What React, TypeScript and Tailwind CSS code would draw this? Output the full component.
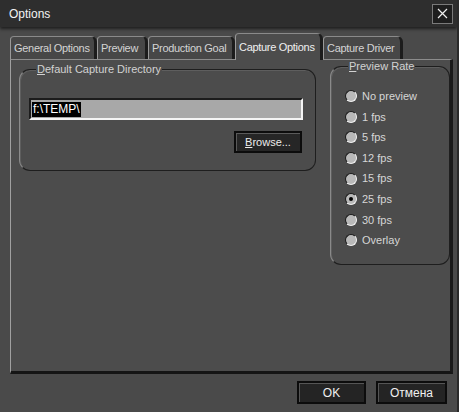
import React from "react";

const font = { fontFamily: '"Liberation Sans", Arial, sans-serif' };

function Tab({ label, w, active }: { label: string; w: number; active?: boolean }) {
  return (
    <div
      style={{ width: w }}
      className={
        "relative flex items-center whitespace-nowrap rounded-tl-[4px] rounded-tr-[6px] border-l border-t border-l-[#9a9a9a] border-t-[#8a8a8a] border-r-[3px] border-r-[#1c1c1c] pl-[3px] text-[11px] leading-none tracking-[-0.3px] " +
        (active ? "h-[27px] bg-[#4c4c4c] text-[#f0f0f0] -mb-[1px] z-10" : "h-[23px] bg-[#474747] text-[#d4d4d4]")
      }
    >
      {label}
    </div>
  );
}

function Radio({ label, checked }: { label: string; checked?: boolean }) {
  return (
    <div className="flex h-[20.6px] items-center">
      <div className="ml-[14px] flex h-[12px] w-[12px] items-center justify-center rounded-full border border-t-[#1a1a1a] border-l-[#1a1a1a] border-r-[#f0f0f0] border-b-[#f0f0f0] bg-[#b9b9b9]">
        {checked && <div className="h-[4px] w-[4px] rounded-full bg-black" />}
      </div>
      <span className="ml-[5px] text-[11px] text-[#d6d6d6]">{label}</span>
    </div>
  );
}

export default function App() {
  return (
    <div style={font} className="flex h-[412px] w-[459px] flex-col overflow-hidden bg-[#4a4a4a] border-r-[2px] border-r-[#2a2a2a]">
      {/* title bar */}
      <div className="flex h-[27px] items-center justify-between bg-[#2e2e2e] pl-[9px] pr-[4px] shadow-[0_2px_3px_rgba(0,0,0,0.6)]">
        <span className="text-[12px] text-[#f2f2f2]">Options</span>
        <div className="flex h-[20px] w-[21px] items-center justify-center border border-[#7a7a7a] bg-[#1e1e1e]">
          <svg width="11" height="11" viewBox="0 0 11 11">
            <path d="M1 1 L10 10 M10 1 L1 10" stroke="#f0f0f0" strokeWidth="1.2" />
          </svg>
        </div>
      </div>

      <div className="flex flex-1 flex-col px-[10px] pt-[6px]">
        {/* tabs */}
        <div className="flex h-[26px] items-end">
          <Tab label="General Options" w={87} />
          <Tab label="Preview" w={51} />
          <Tab label="Production Goal" w={87} />
          <Tab label="Capture Options" w={88} active />
          <Tab label="Capture Driver" w={80} />
        </div>

        {/* panel */}
        <div className="relative flex h-[315px] w-[443px] border-l border-t border-l-[#a0a0a0] border-t-[#8c8c8c] border-r-[3px] border-r-[#1a1a1a] border-b-[3px] border-b-[#151515] bg-[#4c4c4c] pl-[8px]">
          {/* default capture dir group */}
          <div className="relative mt-[9px] h-[102px] w-[297px] rounded-[11px] border border-[#1e1e1e] border-l-[#8a8a8a] shadow-[inset_1px_1px_0_#5e5e5e]">
            <span className="absolute -top-[7px] left-[16px] bg-[#4c4c4c] px-[1px] text-[11px] leading-[13px] text-[#d2d2d2]">
              <span className="underline">D</span>efault Capture Directory
            </span>
            <div className="ml-[9px] mt-[28px] flex h-[22px] w-[274px] items-center border-[2px] border-l-[#1c1c1c] border-t-[#1c1c1c] border-r-[#f4f4f4] border-b-[#f4f4f4] bg-[#a8a8a8] pl-[1px]">
              <span className="bg-black px-[1px] text-[12px] leading-[15px] text-white">f:\TEMP\</span>
            </div>
            <div className="ml-[214px] mt-[11px] flex h-[22px] w-[68px] items-center justify-center border-[2px] border-[#0c0c0c] bg-[#262626] shadow-[inset_1px_1px_0_#5a5a5a] text-[11px] text-[#ececec]">
              <span>
                <span className="underline">B</span>rowse...
              </span>
            </div>
          </div>

          {/* preview rate group */}
          <div className="relative ml-[14px] mt-[6px] h-[199px] w-[120px] rounded-[11px] border border-[#1e1e1e] border-l-[#8a8a8a] shadow-[inset_1px_1px_0_#5e5e5e]">
            <span className="absolute -top-[7px] left-[17px] bg-[#4c4c4c] px-[1px] text-[11px] leading-[13px] text-[#d2d2d2]">
              <span className="underline">P</span>review Rate
            </span>
            <div className="mt-[19px] flex flex-col">
              <Radio label="No preview" />
              <Radio label="1 fps" />
              <Radio label="5 fps" />
              <Radio label="12 fps" />
              <Radio label="15 fps" />
              <Radio label="25 fps" checked />
              <Radio label="30 fps" />
              <Radio label="Overlay" />
            </div>
          </div>
        </div>

        {/* buttons */}
        <div className="mt-[7px] flex justify-end gap-[10px]">
          <div className="flex h-[23px] w-[69px] items-center justify-center border-[2px] border-[#0c0c0c] bg-[#242424] shadow-[inset_1px_1px_0_#555] text-[12px] text-[#f0f0f0]">OK</div>
          <div className="flex h-[23px] w-[71px] items-center justify-center border-[2px] border-[#0c0c0c] bg-[#242424] shadow-[inset_1px_1px_0_#555] text-[12px] text-[#f0f0f0]">Отмена</div>
        </div>
      </div>
    </div>
  );
}
